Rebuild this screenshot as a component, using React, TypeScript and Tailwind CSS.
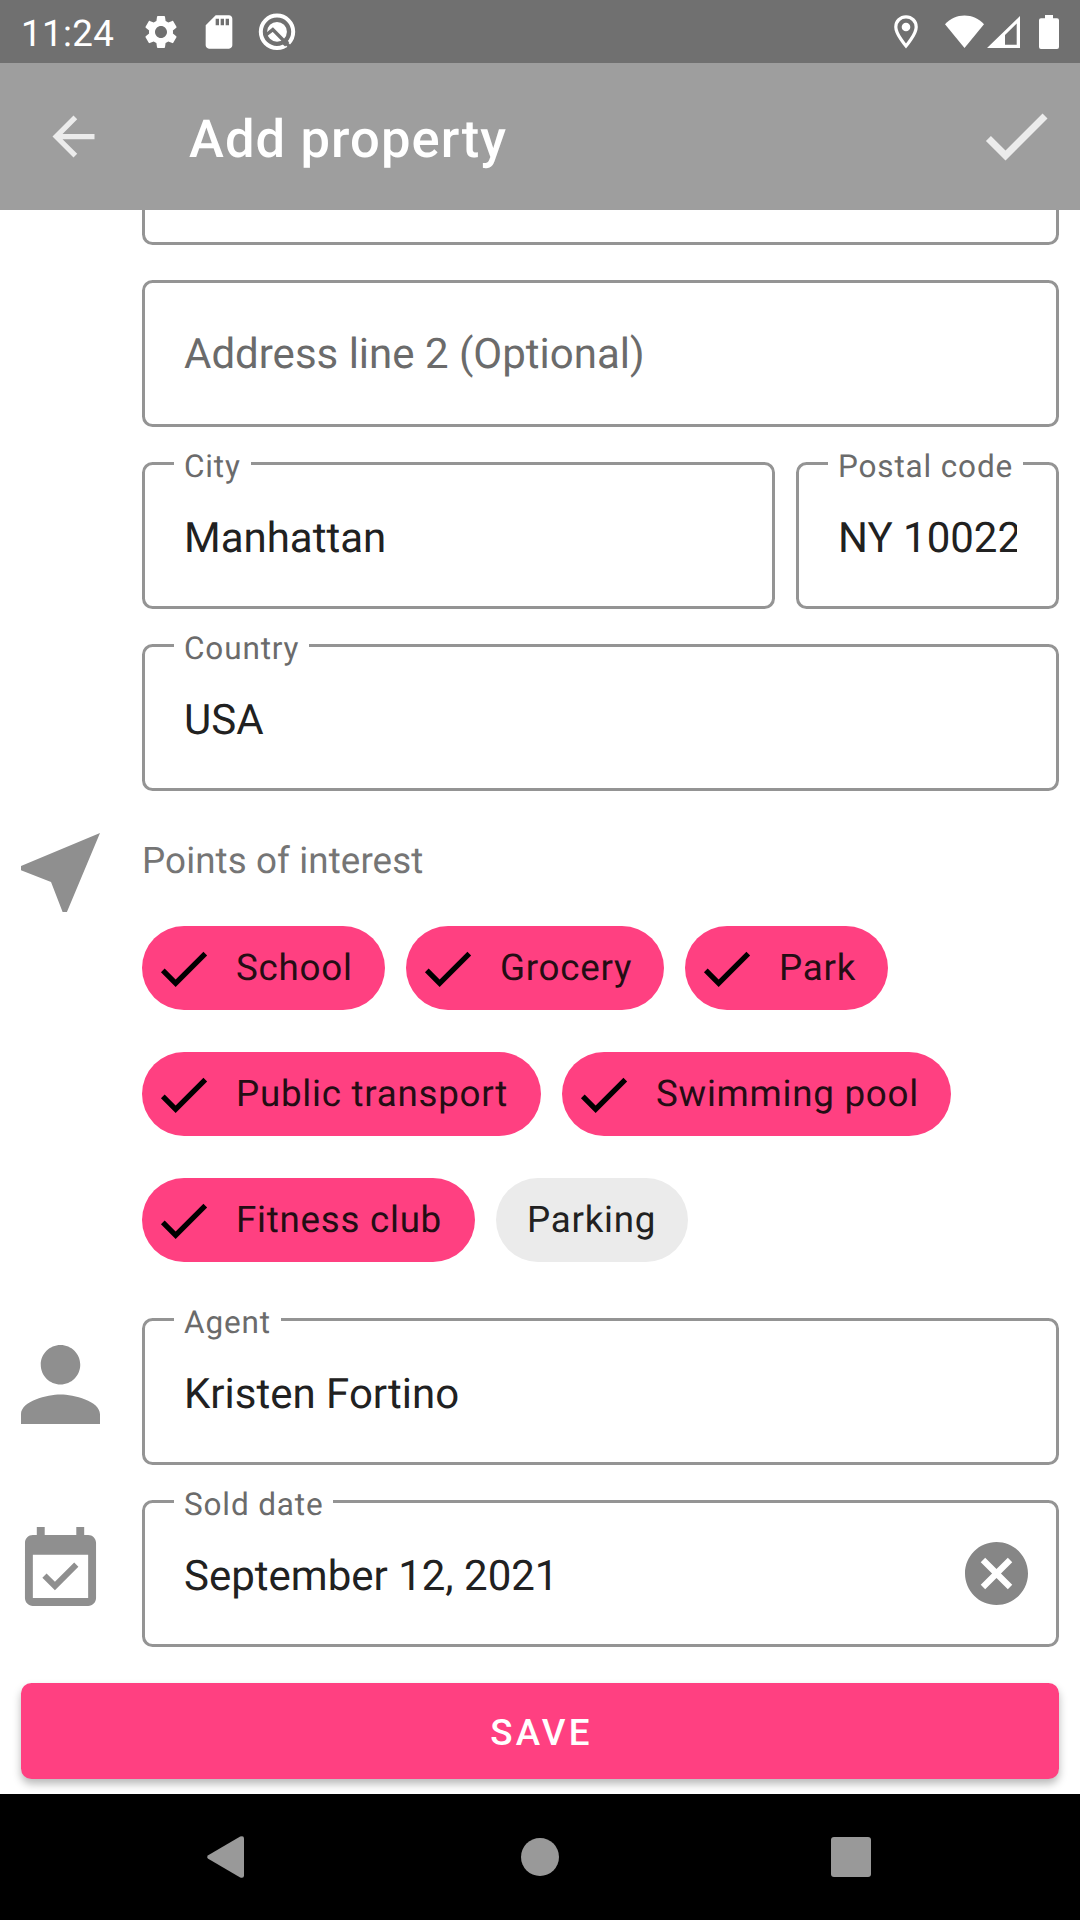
import type { ReactNode } from "react";

const CHECK = "M9 16.17L4.83 12l-1.42 1.41L9 19 21 7l-1.41-1.41z";

type IconProps = { d: string; className: string; viewBox?: string };

function Icon({ d, className, viewBox = "0 0 24 24" }: IconProps) {
  return (
    <svg viewBox={viewBox} className={`shrink-0 ${className}`} fill="currentColor" aria-hidden="true">
      <path d={d} />
    </svg>
  );
}

function StatusBar() {
  return (
    <div className="flex h-[63px] shrink-0 items-center justify-between bg-[#707070] pl-[21px] pr-[21px] text-white">
      <div className="flex items-center">
        <span className="w-[120px] whitespace-nowrap pt-[3px] text-[36.75px] leading-[63px] tracking-[0.01em]">11:24</span>
        <Icon
          className="size-10"
          d="M19.14 12.94c.04-.3.06-.61.06-.94 0-.32-.02-.64-.07-.94l2.03-1.58c.18-.14.23-.41.12-.61l-1.92-3.32c-.12-.22-.37-.29-.59-.22l-2.39.96c-.5-.38-1.03-.7-1.62-.94l-.36-2.54c-.04-.24-.24-.41-.48-.41h-3.84c-.24 0-.43.17-.47.41l-.36 2.54c-.59.24-1.13.57-1.62.94l-2.39-.96c-.22-.08-.47 0-.59.22L2.74 8.87c-.12.21-.08.47.12.61l2.03 1.58c-.05.3-.09.63-.09.94s.02.64.07.94l-2.03 1.58c-.18.14-.23.41-.12.61l1.92 3.32c.12.22.37.29.59.22l2.39-.96c.5.38 1.03.7 1.62.94l.36 2.54c.05.24.24.41.48.41h3.84c.24 0 .44-.17.47-.41l.36-2.54c.59-.24 1.13-.56 1.62-.94l2.39.96c.22.08.47 0 .59-.22l1.92-3.32c.12-.22.07-.47-.12-.61l-2.01-1.58zM12 15.6c-1.98 0-3.6-1.62-3.6-3.6s1.62-3.6 3.6-3.6 3.6 1.62 3.6 3.6-1.62 3.6-3.6 3.6z"
        />
        <Icon
          className="ml-[18px] size-10"
          d="M18 2h-8L4.02 8 4 20c0 1.1.9 2 2 2h12c1.1 0 2-.9 2-2V4c0-1.1-.9-2-2-2zm-6 6h-2V4h2v4zm3 0h-2V4h2v4zm3 0h-2V4h2v4z"
        />
        <svg viewBox="0 0 38 38" className="ml-[19px] size-[38px]" aria-hidden="true">
          <circle cx="19" cy="18.8" r="16.2" fill="none" stroke="#fff" strokeWidth="4" />
          <circle cx="19" cy="18.8" r="9.9" fill="#fff" />
          <path d="M8 22L14.8 16.6L31.5 33.5" fill="none" stroke="#707070" strokeWidth="3.4" />
          <path d="M26.8 29.2L29.2 31.4" fill="none" stroke="#707070" strokeWidth="6" />
        </svg>
      </div>
      <div className="flex items-center">
        <svg viewBox="0 0 24 34" className="h-[34px] w-6" fill="none" aria-hidden="true">
          <path d="M12 1.8C6.3 1.8 1.8 6.3 1.8 11.9C1.8 19.2 12 31 12 31S22.2 19.2 22.2 11.9C22.2 6.3 17.7 1.8 12 1.8Z" stroke="#fff" strokeWidth="3.2" />
          <circle cx="12" cy="12" r="4.3" fill="#fff" />
        </svg>
        <svg viewBox="0 0 39 34" className="ml-[27px] h-[34px] w-[39px]" fill="#fff" aria-hidden="true">
          <path d="M0 9.2C5.2 3.5 12 .4 19.5 .4S33.8 3.5 39 9.2L19.5 33Z" />
        </svg>
        <svg viewBox="0 0 33 34" className="ml-[3px] h-[34px] w-[33px]" fill="#fff" fillRule="evenodd" aria-hidden="true">
          <path d="M33 1V33H0ZM29.7 8.6L18 20V29.7H29.7Z" />
        </svg>
        <svg viewBox="0 0 20 34" className="ml-[19px] h-[34px] w-5" fill="#fff" aria-hidden="true">
          <path d="M6 0H14V3.2H18Q20 3.2 20 5.2V32Q20 34 18 34H2Q0 34 0 32V5.2Q0 3.2 2 3.2H6Z" />
        </svg>
      </div>
    </div>
  );
}

function Toolbar() {
  return (
    <header className="flex h-[147px] shrink-0 items-center bg-[#9e9e9e] pl-[42px] pr-[22px] text-[#ececec]">
      <Icon className="size-[63px]" d="M20 11H7.83l5.59-5.59L12 4l-8 8 8 8 1.41-1.41L7.83 13H20v-2z" />
      <h1 className="ml-[84px] grow pt-[5px] text-[52.5px] font-medium leading-[147px] tracking-[0.021em] text-white">
        Add property
      </h1>
      <Icon className="mb-0.5 size-[84px]" d={CHECK} />
    </header>
  );
}

type FieldProps = { label: string; value?: string; className: string; children?: ReactNode };

function Field({ label, value, className, children }: FieldProps) {
  return (
    <div
      className={`relative flex h-[147px] items-center justify-between rounded-[10.5px] border-3 border-[#949494] pl-[39px] pr-[28px] ${className}`}
    >
      {value ? (
        <>
          <span className="absolute -top-4 left-[29px] whitespace-nowrap bg-white px-[10px] text-[31.5px] leading-9 tracking-[0.027em] text-[#6b6b6b]">
            {label}
          </span>
          <span className="overflow-hidden whitespace-nowrap pt-1.5 text-[42px] leading-[56px] text-[#212121]">
            {value}
          </span>
        </>
      ) : (
        <span className="pt-0.5 text-[42px] leading-[56px] text-[#6b6b6b]">{label}</span>
      )}
      {children}
    </div>
  );
}

type ChipProps = { label: string; className: string; checked?: boolean };

function Chip({ label, className, checked = true }: ChipProps) {
  return (
    <div
      className={`flex h-[84px] items-center rounded-full text-[36.75px] tracking-[0.02em] ${
        checked ? "bg-[#ff4081] pl-[10px] text-[#240d14]" : "bg-[#ebebeb] pl-[31px] text-[#212121]"
      } ${className}`}
    >
      {checked && <Icon className="mr-[21px] size-[63px] text-black" d={CHECK} />}
      <span className="whitespace-nowrap leading-[84px]">{label}</span>
    </div>
  );
}

type RowProps = { icon?: ReactNode; children: ReactNode };

function Row({ icon, children }: RowProps) {
  return (
    <div className="flex">
      <div className="w-[121px] shrink-0">{icon}</div>
      <div className="min-w-0 grow">{children}</div>
    </div>
  );
}

export default function App() {
  return (
    <div className="flex h-[1920px] w-[1080px] flex-col overflow-hidden bg-white font-['Roboto',sans-serif] [text-rendering:geometricPrecision]">
      <StatusBar />
      <Toolbar />
      <main className="flex h-[1584px] flex-col gap-[35px] overflow-hidden px-[21px]">
        <Row>
          <div className="h-[35px] rounded-b-[10.5px] border-3 border-t-0 border-[#949494]" />
        </Row>
        <Row>
          <Field label="Address line 2 (Optional)" className="w-full" />
        </Row>
        <Row>
          <div className="flex justify-between">
            <Field label="City" value="Manhattan" className="w-[633px]" />
            <Field label="Postal code" value="NY 10022" className="w-[263px] pr-[39px]!" />
          </div>
        </Row>
        <Row>
          <Field label="Country" value="USA" className="w-full" />
        </Row>
        <Row
          icon={
            <Icon
              className="mt-[7px] size-[79px] text-[#8f8f8f]"
              viewBox="3 3 18 18"
              d="M21 3L3 10.53v.98l6.84 2.65L12.48 21h.98L21 3z"
            />
          }
        >
          <div className="h-[457px]">
            <h2 className="h-[100px] pt-[10px] text-[36.75px] leading-[50px] tracking-[0.003em] text-[#757575]">
              Points of interest
            </h2>
            <div className="flex flex-col gap-[42px]">
              <div className="flex gap-[21px]">
                <Chip label="School" className="w-[243px]" />
                <Chip label="Grocery" className="w-[258px]" />
                <Chip label="Park" className="w-[203px]" />
              </div>
              <div className="flex gap-[21px]">
                <Chip label="Public transport" className="w-[399px]" />
                <Chip label="Swimming pool" className="w-[389px]" />
              </div>
              <div className="flex gap-[21px]">
                <Chip label="Fitness club" className="w-[333px]" />
                <Chip label="Parking" className="w-[192px]" checked={false} />
              </div>
            </div>
          </div>
        </Row>
        <Row
          icon={
            <Icon
              className="mt-[27px] size-[79px] text-[#8f8f8f]"
              viewBox="4 4 16 16"
              d="M12 12c2.21 0 4-1.79 4-4s-1.79-4-4-4-4 1.79-4 4 1.79 4 4 4zm0 2c-2.67 0-8 1.34-8 4v2h16v-2c0-2.66-5.33-4-8-4z"
            />
          }
        >
          <Field label="Agent" value="Kristen Fortino" className="w-full" />
        </Row>
        <Row
          icon={
            <Icon
              className="mt-[27px] size-[79px] text-[#8f8f8f]"
              viewBox="2 1 20 20"
              d="M16.53 11.06L15.47 10l-4.88 4.88-2.12-2.12-1.06 1.06L10.59 17l5.94-5.94zM19 3h-1V1h-2v2H8V1H6v2H5c-1.11 0-1.99.9-1.99 2L3 19c0 1.1.89 2 2 2h14c1.1 0 2-.9 2-2V5c0-1.1-.9-2-2-2zm0 16H5V8h14v11z"
            />
          }
        >
          <Field label="Sold date" value="September 12, 2021" className="w-full">
            <Icon
              className="size-[63px] text-[#868686]"
              viewBox="2 2 20 20"
              d="M12 2C6.47 2 2 6.47 2 12s4.47 10 10 10 10-4.47 10-10S17.53 2 12 2zm5 13.59L15.59 17 12 13.41 8.41 17 7 15.59 10.59 12 7 8.41 8.41 7 12 10.59 15.59 7 17 8.41 13.41 12 17 15.59z"
            />
          </Field>
        </Row>
        <button className="mt-px h-24 shrink-0 rounded-[10.5px] bg-[#ff4081] pl-[3px] pt-[3px] text-[36.75px] font-medium leading-[93px] tracking-[0.0892857em] text-white shadow-[0_5px_8px_rgba(0,0,0,0.28)]">
          SAVE
        </button>
      </main>
      <nav className="flex h-[126px] shrink-0 items-center bg-black pl-[207px] text-[#999]">
        <svg viewBox="0 0 37 42" className="h-[42px] w-[37px]" fill="currentColor" aria-hidden="true">
          <path d="M1.2 19.2L33.2 .5Q37 -.8 37 2.5V39.5Q37 42.8 33.2 41.5L1.2 22.8Q-.8 21 1.2 19.2Z" />
        </svg>
        <div className="ml-[277px] size-[38px] rounded-full bg-[#999]" />
        <div className="ml-[272px] size-10 rounded-[3px] bg-[#999]" />
      </nav>
    </div>
  );
}
